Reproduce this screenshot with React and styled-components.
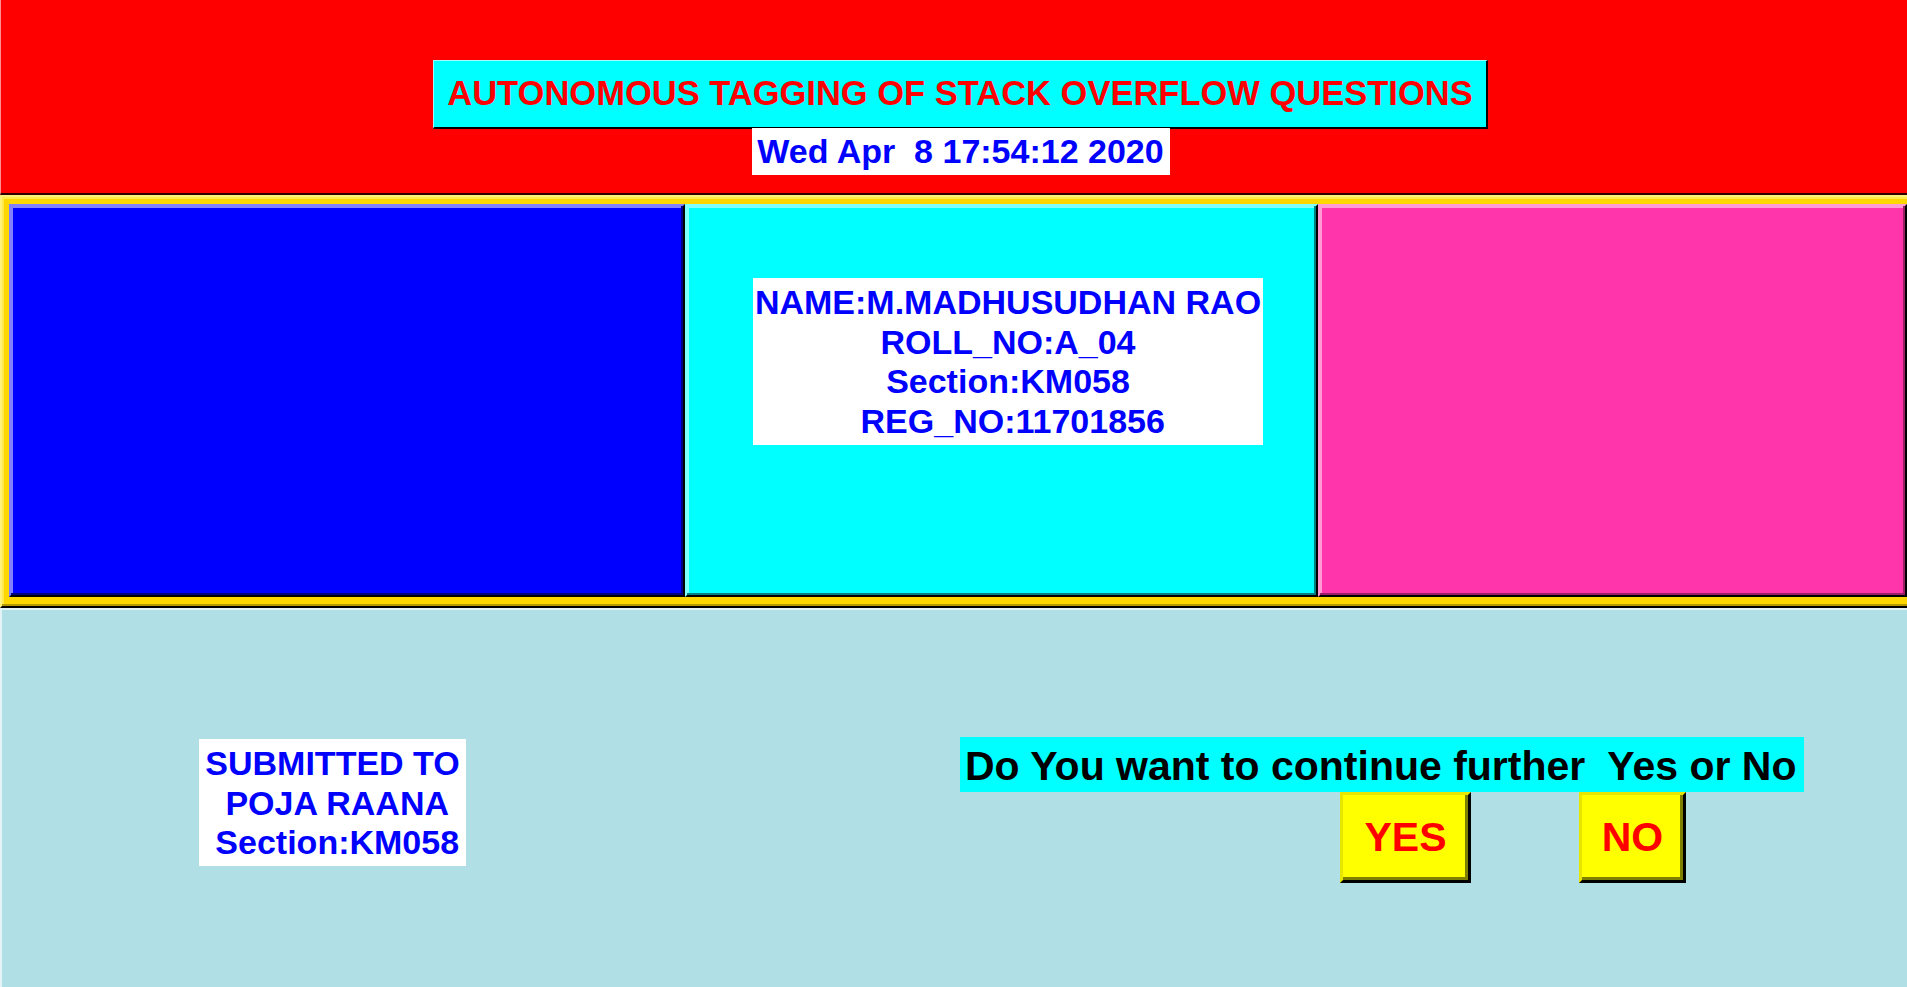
import * as React from 'react';
import styled, {createGlobalStyle, css} from 'styled-components';

const GlobalStyle = createGlobalStyle`
    html, body {
        margin: 0;
        padding: 0;
        overflow: hidden;
        background: #B0E0E6;
    }
    body {
        font-family: "Liberation Sans", Arial, sans-serif;
        font-weight: bold;
    }
`;

// tk style "raised" relief: light on top/left, dark on bottom/right
const raised = (light, dark, inner) => css`
    border-style: solid;
    border-width: 2px;
    border-color: ${light} #000 #000 ${light};
    box-shadow: inset -2px -2px 0 ${dark}, inset 2px 2px 0 ${inner || light};
`;

const Window = styled.div`
    width: 1920px;
    height: 987px;
    display: flex;
    flex-direction: column;
`;

const Header = styled.header`
    box-sizing: border-box;
    height: 195px;
    background: #FF0000;
    border-left: 1px solid #ff9090;
    border-bottom: 2px solid #2a0000;
    display: flex;
    flex-direction: column;
    align-items: center;
    padding-top: 60px;
`;

const Title = styled.h1`
    box-sizing: border-box;
    margin: 0;
    width: 1055px;
    height: 69px;
    background: #00FFFF;
    color: #FF0000;
    font-size: 34.5px;
    line-height: 65px;
    text-align: center;
    border-style: solid;
    border-width: 1px 2px 2px 1px;
    border-color: #9ffcfc #000 #000 #9ffcfc;
    white-space: nowrap;
`;

const DateLabel = styled.div`
    box-sizing: border-box;
    width: 418px;
    height: 47px;
    margin-top: -1px;
    background: #FFFFFF;
    color: #0000FF;
    font-size: 34px;
    line-height: 47px;
    text-align: center;
    white-space: pre;
`;

const Middle = styled.section`
    box-sizing: border-box;
    height: 413px;
    background: #FFD700;
    border-style: solid;
    border-width: 2px 0 2px 2px;
    border-color: #fff27a #000 #000 #fff27a;
    box-shadow: inset 0 -2px 0 #b89b00, inset 2px 2px 0 #ffe94d;
    padding: 7px 0 9px 7px;
    display: flex;
`;

const Panel = styled.div`
    box-sizing: border-box;
    height: 100%;
    width: ${props => props.width}px;
    flex: none;
    background: ${props => props.bg};
    ${props => raised(props.light, props.dark)};
`;

const InfoPanel = styled(Panel)`
    padding: 72px 0 0 66px;
`;

const InfoBox = styled.div`
    box-sizing: border-box;
    width: ${props => props.width}px;
    height: ${props => props.height}px;
    padding: 5px 0 3px;
    background: #FFFFFF;
    color: #0000FF;
    font-size: 34px;
    line-height: 39.7px;
    text-align: center;
    white-space: pre;
`;

const Bottom = styled.section`
    box-sizing: border-box;
    flex: 1;
    background: #B0E0E6;
    border-top: 2px solid #e4f4f6;
    border-left: 2px solid #e4f4f6;
    display: flex;
    align-items: flex-start;
    padding: 129px 0 0 197px;
`;

const Prompt = styled.div`
    margin-left: 494px;
    margin-top: -2px;
    display: flex;
    flex-direction: column;
`;

const Question = styled.div`
    box-sizing: border-box;
    width: 844px;
    height: 55px;
    padding: 6px 0 0 5px;
    background: #00FFFF;
    color: #000000;
    font-size: 41px;
    line-height: 47px;
    white-space: pre;
`;

const ButtonRow = styled.div`
    display: flex;
    gap: 108px;
    padding-left: 380px;
`;

const Button = styled.button`
    box-sizing: border-box;
    width: ${props => props.width}px;
    height: 91px;
    padding: 0;
    background: #FFFF00;
    color: #FF0000;
    font-family: "Liberation Sans", Arial, sans-serif;
    font-weight: bold;
    font-size: 41px;
    border-style: solid;
    border-width: 3px;
    border-color: #e6e600 #000 #000 #e6e600;
    box-shadow: inset -3px -3px 0 #808000;
    cursor: pointer;
`;

export default function App() {
    return (
        <Window>
            <GlobalStyle />
            <Header>
                <Title>AUTONOMOUS TAGGING OF STACK OVERFLOW QUESTIONS</Title>
                <DateLabel>{'Wed Apr  8 17:54:12 2020'}</DateLabel>
            </Header>
            <Middle>
                <Panel width={676} bg="#0000FF" light="#8080FF" dark="#000080" />
                <InfoPanel width={633} bg="#00FFFF" light="#80FFFF" dark="#008080">
                    <InfoBox width={510} height={167}>
                        {'NAME:M.MADHUSUDHAN RAO\nROLL_NO:A_04\nSection:KM058\n REG_NO:11701856'}
                    </InfoBox>
                </InfoPanel>
                <Panel width={589} bg="#FF35AC" light="#FF9AD5" dark="#9a1f67" />
            </Middle>
            <Bottom>
                <InfoBox width={267} height={127}>
                    {'SUBMITTED TO\n POJA RAANA\n Section:KM058'}
                </InfoBox>
                <Prompt>
                    <Question>{'Do You want to continue further  Yes or No'}</Question>
                    <ButtonRow>
                        <Button width={131}>YES</Button>
                        <Button width={107}>NO</Button>
                    </ButtonRow>
                </Prompt>
            </Bottom>
        </Window>
    );
}
